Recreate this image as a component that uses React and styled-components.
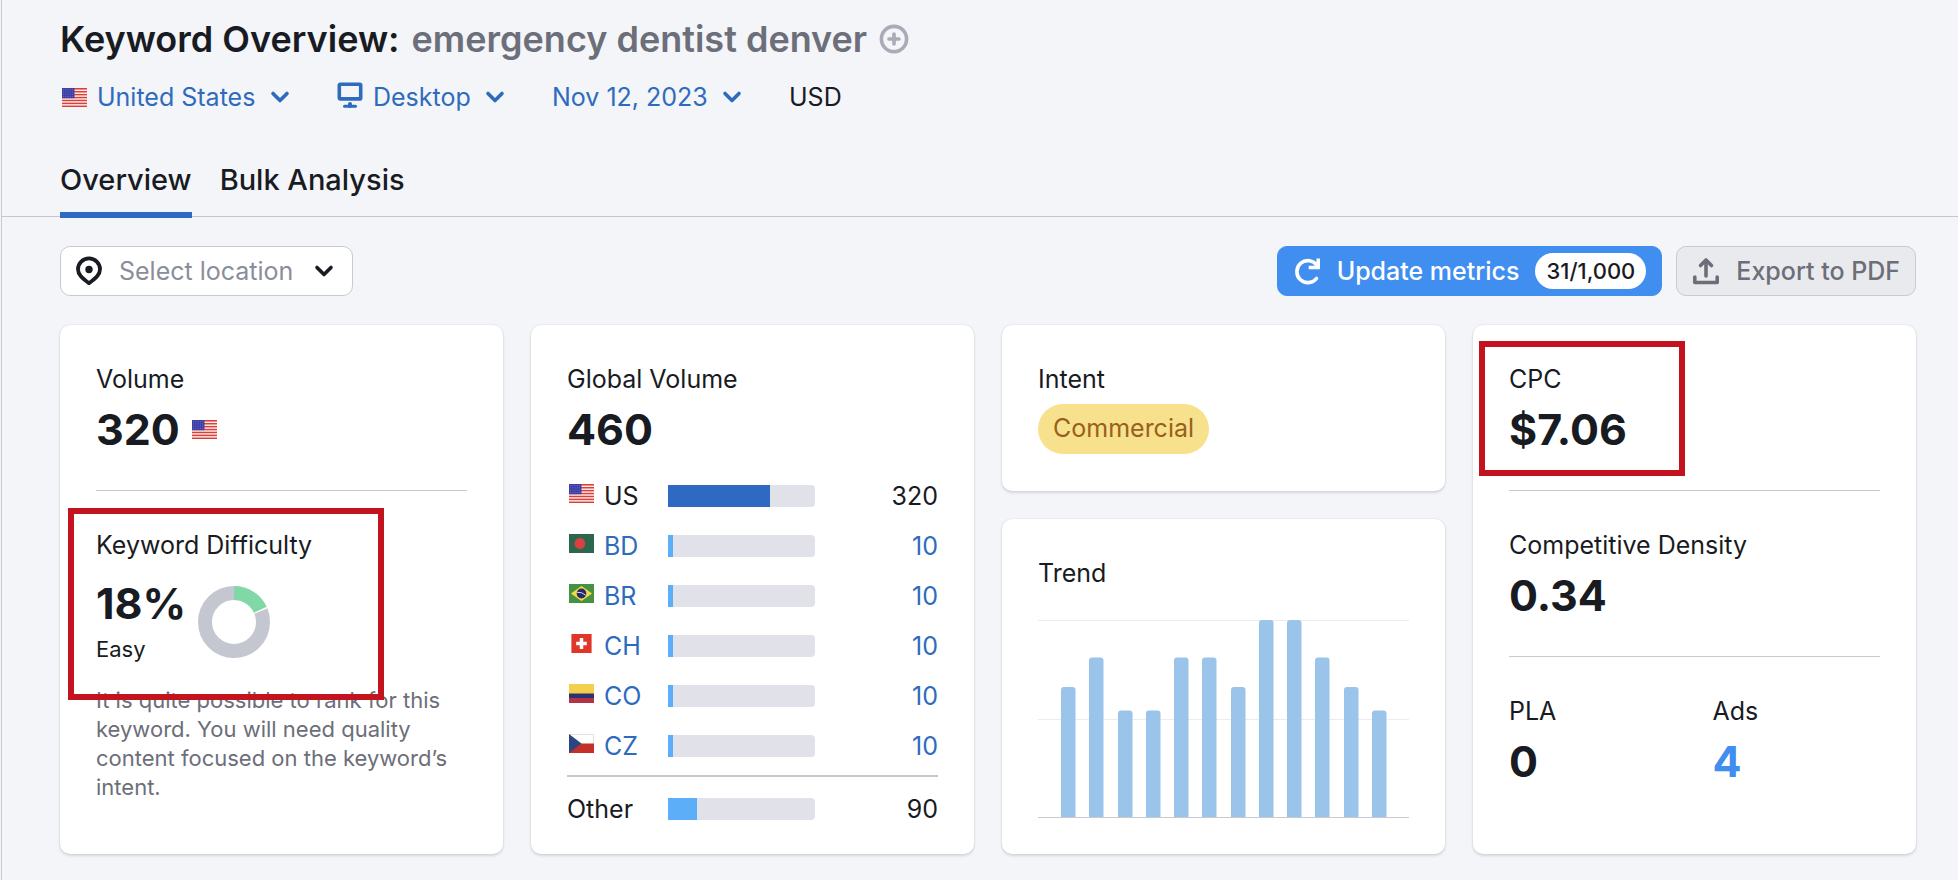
import styled, { createGlobalStyle } from "styled-components";

const ink = "#191b23";
const grey = "#6c6e79";
const link = "#2f6bbd";
const blue = "#408ef0";
const line = "#c8cacf";
const mark = "#c3131f";

const GlobalStyle = createGlobalStyle`
  * {
    box-sizing: border-box;
  }
  body {
    margin: 0;
    background: #f3f5f9;
    color: ${ink};
    font-family: "Inter", "Liberation Sans", sans-serif;
    font-size: 25px;
    line-height: 36px;
  }
  button, select {
    font: inherit;
  }
`;

const Page = styled.div`
  min-height: 100vh;
  border-left: 1px solid ${line};
  margin-left: 1px;
`;

const Header = styled.header`
  padding: 16px 42px 0 58px;
  border-bottom: 1px solid #c4c7cf;
`;

const TitleRow = styled.div`
  display: flex;
  align-items: center;
  gap: 12px;
`;

const Title = styled.h1`
  margin: 0;
  font-size: 36px;
  line-height: 46px;
  font-weight: 600;
`;

const Keyword = styled.span`
  margin-left: 12px;
  color: ${grey};
`;

const IconButton = styled.button`
  display: flex;
  padding: 0;
  border: 0;
  background: none;
  color: #a9abb6;
  cursor: pointer;
`;

const Filters = styled.div`
  display: flex;
  align-items: center;
  gap: 47px;
  margin-top: 17px;
  padding-left: 2px;
`;

const Filter = styled.label`
  display: flex;
  align-items: center;
  gap: 10px;
  color: ${link};
`;

const Select = styled.select`
  appearance: none;
  margin-right: 4px;
  padding: 0;
  border: 0;
  outline: 0;
  background: none;
  color: ${(props) => props.$color || "inherit"};
  line-height: 36px;
  cursor: pointer;
`;

const Tabs = styled.nav`
  display: flex;
  gap: 28px;
  margin-top: 44px;
  margin-bottom: -2px;
`;

const Tab = styled.a`
  height: 59px;
  border-bottom: 6px solid ${(props) => (props.$active ? "#2e6ac1" : "transparent")};
  color: ${ink};
  font-size: 29px;
  line-height: 42px;
  font-weight: 500;
  text-decoration: none;
`;

const Main = styled.main`
  padding: 29px 42px 26px 58px;
`;

const Toolbar = styled.div`
  display: flex;
  justify-content: space-between;
  margin-bottom: 29px;
`;

const Location = styled.label`
  display: flex;
  align-items: center;
  gap: 16px;
  height: 50px;
  padding: 0 18px 0 14px;
  border: 1px solid ${line};
  border-radius: 10px;
  background: #fff;
`;

const Actions = styled.div`
  display: flex;
  gap: 14px;
`;

const Button = styled.button`
  display: flex;
  align-items: center;
  gap: 16px;
  height: 50px;
  padding: 0 15px;
  border: 1px solid ${(props) => (props.$primary ? blue : line)};
  border-radius: 10px;
  background: ${(props) => (props.$primary ? blue : "#e9eaee")};
  color: ${(props) => (props.$primary ? "#fff" : grey)};
  font-weight: 500;
  cursor: pointer;
`;

const Limit = styled.span`
  padding: 0 11px;
  border-radius: 18px;
  background: #fff;
  color: ${ink};
  font-size: 22px;
`;

const Cards = styled.div`
  display: grid;
  grid-template-columns: repeat(4, 1fr);
  gap: 28px;
`;

const Stack = styled.div`
  display: flex;
  flex-direction: column;
  gap: 28px;
`;

const Card = styled.section`
  flex: ${(props) => (props.$grow ? 1 : "none")};
  padding: 0 36px;
  border-radius: 10px;
  background: #fff;
  box-shadow: 0 0 2px rgba(25, 27, 35, 0.14), 0 2px 3px rgba(25, 27, 35, 0.12);
`;

const Metric = styled.div`
  position: relative;
  padding: 36px 0 ${(props) => (props.$compact ? "12px" : "37px")};

  & + & {
    border-top: 1px solid ${line};
  }
`;

const Columns = styled.div`
  display: grid;
  grid-template-columns: 1fr 1fr;
  gap: 36px;
`;

const Label = styled.h2`
  margin: 0;
  font-size: 25px;
  line-height: 36px;
  font-weight: 400;
`;

const Value = styled.div`
  display: flex;
  align-items: center;
  gap: 12px;
  margin-top: 8px;
  font-size: 43px;
  line-height: 48px;
  font-weight: 700;
`;

const ValueLink = styled.a`
  color: ${blue};
  text-decoration: none;
`;

const Difficulty = styled.div`
  display: flex;
  align-items: center;
  gap: 12px;
  margin-top: 16px;

  ${Value} {
    margin-top: 0;
  }
`;

const Level = styled.div`
  margin-top: 8px;
  font-size: 22px;
  line-height: 29px;
`;

const Note = styled.p`
  margin: 22px 0 0;
  color: ${grey};
  font-size: 22px;
  line-height: 29px;
`;

const Tag = styled.span`
  display: block;
  width: fit-content;
  height: 50px;
  margin-top: 7px;
  padding: 0 15px;
  border-radius: 25px;
  background: #f7e18d;
  color: #99601c;
  line-height: 48px;
`;

// red frame drawn over the metric it points at
const Highlight = styled.div`
  position: absolute;
  top: ${(props) => props.$top}px;
  left: ${(props) => props.$left}px;
  width: ${(props) => props.$width}px;
  height: ${(props) => props.$height}px;
  border: 6px solid ${mark};
  pointer-events: none;
`;

const Table = styled.table`
  width: 100%;
  margin-top: 18px;
  border-collapse: collapse;

  th, td {
    height: 50px;
    padding: 0;
    font-weight: 400;
    text-align: left;
  }
  th {
    width: 101px;
  }
  td:last-child {
    text-align: right;
  }
  tbody tr:last-child > * {
    height: 55px;
    padding-bottom: 4px;
  }
  tfoot tr {
    border-top: 2px solid #c8c8cc;
  }
  tfoot tr > * {
    height: 64px;
  }
`;

const Country = styled.span`
  display: flex;
  align-items: center;
  gap: 10px;
  padding-left: 2px;

  svg {
    margin-bottom: 5px;
  }
`;

const RowLink = styled.a`
  color: ${link};
  text-decoration: none;
`;

const Track = styled.div`
  width: 147px;
  height: 22px;
  border-radius: 0 4px 4px 0;
  background: #e0e1e9;
  overflow: hidden;
`;

const Fill = styled.div`
  height: 100%;
  background: ${(props) => props.$color};
`;

const Chart = styled.svg`
  display: block;
  width: 100%;
  height: 199px;
  margin-top: 28px;
  margin-bottom: -1px;
`;

const Icon = styled.svg`
  flex: none;
  display: block;
`;

const stripes = [0, 1, 2, 3, 4, 5, 6];

const flagArt = {
  US: (
    <>
      <rect width="26" height="19" fill="#fff" />
      {stripes.map((n) => (
        <rect key={n} y={n * 2.92} width="26" height="1.6" fill="#dd3f36" />
      ))}
      <rect width="13" height="10.2" fill="#3c3fa6" />
      {stripes.slice(0, 4).map((n) => (
        <path key={n} d={`M1 ${1.6 + n * 2.3}h11`} stroke="#8385cc" strokeWidth=".7" strokeDasharray="1 1.4" />
      ))}
    </>
  ),
  BD: (
    <>
      <rect width="26" height="19" fill="#2d664f" />
      <circle cx="11.3" cy="9.5" r="5.5" fill="#db4040" />
    </>
  ),
  BR: (
    <>
      <rect width="26" height="19" fill="#459242" />
      <path d="M2 9.5 13 2l11 7.5L13 17z" fill="#f6d849" />
      <circle cx="13" cy="9.5" r="5" fill="#252a69" />
      <path d="M8.4 8.3q5-.6 9 3" fill="none" stroke="#d9dfe8" strokeWidth="1" />
    </>
  ),
  CH: (
    <>
      <rect x="2.5" width="21" height="19" fill="#e03528" />
      <path d="M13 4v11M7.5 9.5h11" stroke="#fff" strokeWidth="3.6" />
    </>
  ),
  CO: (
    <>
      <rect width="26" height="19" fill="#f3cf4d" />
      <rect y="9.5" width="26" height="5" fill="#2b3272" />
      <rect y="14" width="26" height="5" fill="#b23347" />
    </>
  ),
  CZ: (
    <>
      <rect x=".3" y=".3" width="25.4" height="18.4" fill="#fff" stroke="#cfcfd3" strokeWidth=".6" />
      <rect y="9.5" width="26" height="9.5" fill="#c23029" />
      <path d="M0 0v19l13-9.5z" fill="#2b4680" />
    </>
  ),
};

const Flag = ({ code }) => (
  <Icon width="25" height="19" viewBox="0 0 26 19" preserveAspectRatio="none" aria-hidden="true">
    {flagArt[code]}
  </Icon>
);

const Chevron = () => (
  <Icon width="20" height="14" viewBox="0 0 20 14" fill="none" stroke="currentColor" strokeWidth="3.6" strokeLinecap="round" strokeLinejoin="round" aria-hidden="true">
    <path d="m3 3.5 7 7 7-7" />
  </Icon>
);

const Plus = () => (
  <Icon width="30" height="30" viewBox="0 0 30 30" fill="none" stroke="currentColor" strokeWidth="3.6" strokeLinecap="round" aria-hidden="true">
    <circle cx="15" cy="15" r="12.6" />
    <path d="M15 10v10M10 15h10" />
  </Icon>
);

const Monitor = () => (
  <Icon width="26" height="30" viewBox="0 0 26 30" fill="none" stroke="currentColor" strokeWidth="3.6" strokeLinecap="round" strokeLinejoin="round" aria-hidden="true">
    <rect x="2.3" y="2.3" width="21.4" height="14.6" rx="1" />
    <path d="M7.5 24.300h11" strokeWidth="3" />
    <path d="M13 22v2" strokeWidth="4" />
  </Icon>
);

const Pin = () => (
  <Icon width="28" height="30" viewBox="0 0 28 30" fill="none" stroke="currentColor" strokeWidth="3.8" strokeLinejoin="round" aria-hidden="true">
    <path d="M14 27.200C7 22 3 18.500 3 13.200a11 10.800 0 0 1 22 0C25 18.500 21 22 14 27.200z" />
    <circle cx="14" cy="13.500" r="3.700" fill="currentColor" stroke="none" />
  </Icon>
);

const Refresh = () => (
  <Icon width="28" height="28" viewBox="0 0 28 28" fill="none" stroke="currentColor" strokeWidth="3.600" aria-hidden="true">
    <path d="M23.500 21.500A11 11 0 1 1 24 8.500" strokeLinecap="round" />
    <path d="M25.200 1.500v9h-9.500" strokeLinejoin="miter" />
  </Icon>
);

const Upload = () => (
  <Icon width="28" height="28" viewBox="0 0 28 28" fill="none" stroke="currentColor" strokeWidth="3.600" strokeLinecap="round" strokeLinejoin="round" aria-hidden="true">
    <path d="M2.800 20v5.500h22.400V20" />
    <path d="M14 19V5" />
    <path d="M8.500 8.500 14 3l5.500 5.500" />
  </Icon>
);

const Donut = ({ percent }) => {
  const r = 29;
  const length = 2 * Math.PI * r;
  const part = (length * percent) / 100;
  return (
    <Icon width="72" height="72" viewBox="0 0 72 72" fill="none" strokeWidth="14" role="img" aria-label={`${percent}%`}>
      <g transform="rotate(-90 36 36)">
        <circle cx="36" cy="36" r={r} stroke="#c4c7cf" />
        <circle cx="36" cy="36" r={r} stroke="#fff" strokeDasharray={`${part + 1.5} ${length}`} />
        <circle cx="36" cy="36" r={r} stroke="#7fd8a6" strokeDasharray={`${part} ${length}`} />
      </g>
    </Icon>
  );
};

const trend = [66, 81, 54, 54, 81, 81, 66, 100, 100, 81, 66, 54];

const TrendChart = () => (
  <Chart viewBox="0 0 371 199" preserveAspectRatio="none" role="img" aria-label="Trend">
    <path d="M0 1.500h371M0 100.500h371" stroke="#ebecf0" />
    {trend.map((value, i) => {
      const top = 198 - value * 1.970;
      const x = 23 + Math.round(i * 28.250);
      return (
        <path key={i} d={`M${x} 198V${top + 3}q0-3 3-3h8.500q3 0 3 3V198z`} fill="#9bc4ea" />
      );
    })}
    <path d="M0 198.500h371" stroke={line} />
  </Chart>
);

const total = 460;
const countries = [
  { code: "US", volume: 320, current: true },
  { code: "BD", volume: 10 },
  { code: "BR", volume: 10 },
  { code: "CH", volume: 10 },
  { code: "CO", volume: 10 },
  { code: "CZ", volume: 10 },
];

const Bar = ({ value, color = "#5baef7" }) => (
  <Track>
    <Fill $color={color} style={{ width: `${Math.max(3.5, (value / total) * 100)}%` }} />
  </Track>
);

const GlobalVolume = () => (
  <Table>
    <tbody>
      {countries.map(({ code, volume, current }) => (
        <tr key={code}>
          <th scope="row">
            <Country>
              <Flag code={code} />
              {current ? code : <RowLink href="#">{code}</RowLink>}
            </Country>
          </th>
          <td>
            <Bar value={volume} color={current ? "#2e6ac1" : undefined} />
          </td>
          <td>{current ? volume : <RowLink href="#">{volume}</RowLink>}</td>
        </tr>
      ))}
    </tbody>
    <tfoot>
      <tr>
        <th scope="row">Other</th>
        <td>
          <Bar value={90} />
        </td>
        <td>90</td>
      </tr>
    </tfoot>
  </Table>
);

export default function App() {
  return (
    <Page>
      <GlobalStyle />
      <Header>
        <TitleRow>
          <Title>
            Keyword Overview:
            <Keyword>emergency dentist denver</Keyword>
          </Title>
          <IconButton aria-label="Add keyword">
            <Plus />
          </IconButton>
        </TitleRow>
        <Filters>
          <Filter>
            <Flag code="US" />
            <Select aria-label="Country">
              <option>United States</option>
            </Select>
            <Chevron />
          </Filter>
          <Filter>
            <Monitor />
            <Select aria-label="Device">
              <option>Desktop</option>
            </Select>
            <Chevron />
          </Filter>
          <Filter>
            <Select aria-label="Date">
              <option>Nov 12, 2023</option>
            </Select>
            <Chevron />
          </Filter>
          <span>USD</span>
        </Filters>
        <Tabs>
          <Tab href="#" $active>
            Overview
          </Tab>
          <Tab href="#">Bulk Analysis</Tab>
        </Tabs>
      </Header>
      <Main>
        <Toolbar>
          <Location>
            <Pin />
            <Select aria-label="Location" $color="#8a8e9b">
              <option>Select location</option>
            </Select>
            <Chevron />
          </Location>
          <Actions>
            <Button $primary>
              <Refresh />
              Update metrics
              <Limit>31/1,000</Limit>
            </Button>
            <Button>
              <Upload />
              Export to PDF
            </Button>
          </Actions>
        </Toolbar>
        <Cards>
          <Card>
            <Metric>
              <Label>Volume</Label>
              <Value>
                320
                <Flag code="US" />
              </Value>
            </Metric>
            <Metric>
              <Label>Keyword Difficulty</Label>
              <Difficulty>
                <div>
                  <Value>18%</Value>
                  <Level>Easy</Level>
                </div>
                <Donut percent={18} />
              </Difficulty>
              <Note>
                It is quite possible to rank for this keyword. You will need quality content focused on the keyword’s
                intent.
              </Note>
              <Highlight $top={17} $left={-28} $width={316} $height={192} />
            </Metric>
          </Card>
          <Card>
            <Metric $compact>
              <Label>Global Volume</Label>
              <Value>460</Value>
              <GlobalVolume />
            </Metric>
          </Card>
          <Stack>
            <Card>
              <Metric>
                <Label>Intent</Label>
                <Tag>Commercial</Tag>
              </Metric>
            </Card>
            <Card $grow>
              <Metric>
                <Label>Trend</Label>
                <TrendChart />
              </Metric>
            </Card>
          </Stack>
          <Card>
            <Metric>
              <Label>CPC</Label>
              <Value>$7.06</Value>
              <Highlight $top={16} $left={-30} $width={206} $height={135} />
            </Metric>
            <Metric>
              <Label>Competitive Density</Label>
              <Value>0.34</Value>
            </Metric>
            <Metric>
              <Columns>
                <div>
                  <Label>PLA</Label>
                  <Value>0</Value>
                </div>
                <div>
                  <Label>Ads</Label>
                  <Value>
                    <ValueLink href="#">4</ValueLink>
                  </Value>
                </div>
              </Columns>
            </Metric>
          </Card>
        </Cards>
      </Main>
    </Page>
  );
}
